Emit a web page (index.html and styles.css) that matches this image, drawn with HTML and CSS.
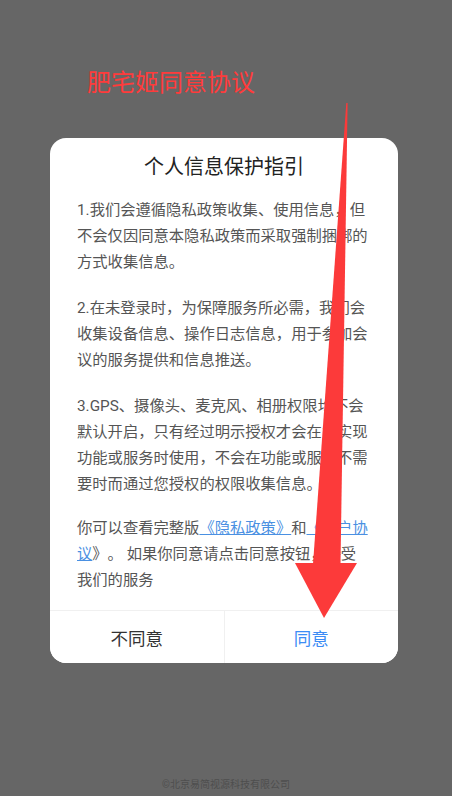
FILE: index.html
```html
<!DOCTYPE html>
<html lang="zh-CN">
<head>
<meta charset="utf-8">
<title>个人信息保护指引</title>
<link rel="stylesheet" href="styles.css">
</head>
<body>
<div class="page">
  <div class="annotation">肥宅姬同意协议</div>
  <div class="dialog">
    <div class="dialog-title">个人信息保护指引</div>
    <div class="dialog-body">
      <div class="terms">
        <p class="para">1.我们会遵循隐私政策收集、使用信息，但不会仅因同意本隐私政策而采取强制捆绑的方式收集信息。</p>
        <p class="para">2.在未登录时，为保障服务所必需，我们会收集设备信息、操作日志信息，用于参加会议的服务提供和信息推送。</p>
        <p class="para">3.GPS、摄像头、麦克风、相册权限均不会默认开启，只有经过明示授权才会在为实现功能或服务时使用，不会在功能或服务不需要时而通过您授权的权限收集信息。</p>
      </div>
      <p class="para notice">你可以查看完整版<a class="link" href="#">《隐私政策》</a>和<a class="link" href="#">《用户协议</a>》。 如果你同意请点击同意按钮，接受我们的服务</p>
    </div>
    <div class="dialog-actions">
      <button class="action action-decline">不同意</button>
      <button class="action action-accept">同意</button>
    </div>
  </div>
  <div class="footer">©北京易简视源科技有限公司</div>
  <svg class="arrow" width="452" height="796" viewBox="0 0 452 796" aria-hidden="true">
    <polygon points="346.3,103 347.6,103 340.5,564 313,564" fill="#fc3a3a"/>
    <polygon points="295,563 357,563 324,618" fill="#fc3a3a"/>
  </svg>
</div>
</body>
</html>
```

FILE: styles.css
```css
html, body {
  margin: 0;
  padding: 0;
}

body {
  background: #666666;
  font-family: Roboto, "Noto Sans CJK SC", "Noto Sans", sans-serif;
  text-spacing-trim: space-all;
}

.page {
  position: relative;
  width: 452px;
  min-height: 796px;
  display: flex;
  flex-direction: column;
}

.annotation {
  margin: 67px 0 0 87px;
  font-size: 24px;
  line-height: 32px;
  color: #ff3b3b;
}

.dialog {
  margin: 39px 0 0 50px;
  width: 348px;
  background: #ffffff;
  border-radius: 16px;
  overflow: hidden;
  display: flex;
  flex-direction: column;
}

.dialog-title {
  padding-top: 15px;
  font-size: 20px;
  line-height: 28px;
  color: #222222;
  text-align: center;
}

.dialog-body {
  padding: 16px 29px 17px 27px;
}

.terms {
  display: flex;
  flex-direction: column;
  gap: 20px;
}

.para {
  margin: 0;
  font-size: 15.3px;
  line-height: 26px;
  color: #555555;
}

.notice {
  margin-top: 18px;
}

.link {
  color: #4a90e2;
  text-decoration: underline;
}

.dialog-actions {
  display: flex;
  border-top: 1px solid #f0f0f0;
}

.action {
  flex: 1;
  height: 52px;
  border: none;
  background: #ffffff;
  font-family: inherit;
  font-size: 17.5px;
  padding: 0;
}

.action-decline {
  color: #333333;
  border-right: 1px solid #f0f0f0;
}

.action-accept {
  color: #3c8cf5;
}

.footer {
  margin-top: auto;
  padding-bottom: 4px;
  font-size: 10px;
  line-height: 14px;
  color: #4e4e4e;
  text-align: center;
}

.arrow {
  position: absolute;
  left: 0;
  top: 0;
  pointer-events: none;
}
```
